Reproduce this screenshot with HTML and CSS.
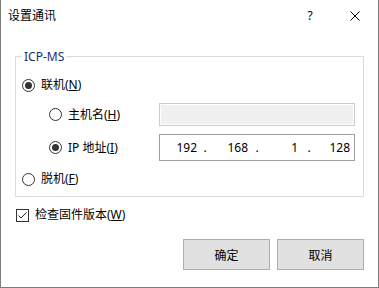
FILE: index.html
```html
<!DOCTYPE html>
<html lang="zh-CN">
<head>
    <meta charset="UTF-8">
    <title>设置通讯</title>
    <link rel="stylesheet" href="styles.css">
</head>
<body>
    <div class="dialogo">
        <div class="titulo">
            <span class="titulo-texto">设置通讯</span>
            <span class="ayuda">?</span>
            <span class="cerrar">
                <svg width="10" height="10" viewBox="0 0 10 10"><path d="M0.5 0.5 L9.5 9.5 M9.5 0.5 L0.5 9.5" stroke="#000" stroke-width="1" fill="none"/></svg>
            </span>
        </div>
        <div class="cuerpo">
            <div class="grupo">
                <span class="leyenda">ICP-MS</span>
                <div class="fila principal">
                    <span class="radio marcado"></span>
                    <span class="etiqueta">联机(<u>N</u>)</span>
                </div>
                <div class="fila sub uno">
                    <div class="sub-etiqueta">
                        <span class="radio"></span>
                        <span class="etiqueta">主机名(<u>H</u>)</span>
                    </div>
                    <div class="caja deshabilitada"></div>
                </div>
                <div class="fila sub dos">
                    <div class="sub-etiqueta">
                        <span class="radio marcado"></span>
                        <span class="etiqueta">IP 地址(<u>I</u>)</span>
                    </div>
                    <div class="caja ip">
                        <span class="num">192</span><span class="punto">.</span>
                        <span class="num">168</span><span class="punto">.</span>
                        <span class="num">1</span><span class="punto">.</span>
                        <span class="num">128</span>
                    </div>
                </div>
                <div class="fila principal ultima">
                    <span class="radio"></span>
                    <span class="etiqueta">脱机(<u>F</u>)</span>
                </div>
            </div>
            <div class="fila check">
                <span class="casilla">
                    <svg width="13" height="13" viewBox="0 0 13 13"><path d="M2.5 6.5 L5 9 L10.5 3.5" stroke="#222" stroke-width="1" fill="none"/></svg>
                </span>
                <span class="etiqueta">检查固件版本(<u>W</u>)</span>
            </div>
            <div class="botones">
                <button class="boton">确定</button>
                <button class="boton">取消</button>
            </div>
        </div>
    </div>
</body>
</html>
```

FILE: styles.css
```css
body {
    margin: 0;
    background: #2b3440;
    font-family: "Segoe UI", "Noto Sans", "Noto Sans CJK SC", sans-serif;
    font-size: 12px;
    color: #000;
}
.dialogo {
    width: 379px;
    height: 288px;
    box-sizing: border-box;
    background: #fff;
    border: 1px solid #7d7d7d;
    border-top: none;
}
.titulo {
    height: 31px;
    display: flex;
    align-items: center;
    padding-left: 7px;
}
.titulo-texto {
    line-height: 14px;
    flex: 1;
}
.ayuda {
    width: 44px;
    text-align: center;
    line-height: 14px;
}
.cerrar {
    width: 46px;
    height: 31px;
    display: flex;
    align-items: center;
    justify-content: center;
}
.cuerpo {
    padding: 0 14px;
}
.grupo {
    position: relative;
    margin-top: 25px;
    height: 141px;
    box-sizing: border-box;
    border: 1px solid #dcdcdc;
}
.leyenda {
    position: absolute;
    top: -7px;
    left: 6px;
    padding: 0 2px;
    background: #fff;
    line-height: 14px;
    color: #172f78;
}
.fila {
    display: flex;
    align-items: center;
}
.principal {
    height: 20px;
    margin-top: 18px;
    padding-left: 6px;
}
.ultima {
    margin-top: 8px;
}
.sub {
    padding-left: 33px;
}
.sub.uno {
    margin-top: 8px;
    height: 23px;
}
.sub.dos {
    margin-top: 8px;
    height: 27px;
}
.sub-etiqueta {
    width: 110px;
    display: flex;
    align-items: center;
}
.etiqueta {
    margin-left: 6px;
    line-height: 14px;
    white-space: nowrap;
}
.radio {
    position: relative;
    width: 13px;
    height: 13px;
    box-sizing: border-box;
    border: 1px solid #333;
    border-radius: 50%;
    flex: none;
}
.radio.marcado::after {
    content: "";
    position: absolute;
    top: 2px;
    left: 2px;
    width: 7px;
    height: 7px;
    border-radius: 50%;
    background: #333;
}
.caja {
    width: 196px;
    box-sizing: border-box;
    height: 100%;
}
.deshabilitada {
    border: 1px solid #cccccc;
    background: #f0f0f0;
    box-shadow: inset 0 0 0 1px #fff;
}
.ip {
    border: 1px solid #a0a0a0;
    background: #fff;
    display: grid;
    grid-template-columns: 37px 16px 35px 18px 32px 22px 30px;
    align-items: center;
    line-height: 14px;
}
.num {
    text-align: right;
}
.punto {
    text-align: center;
}
.check {
    margin-top: 8px;
    height: 20px;
    padding-left: 1px;
}
.casilla {
    width: 13px;
    height: 13px;
    box-sizing: border-box;
    border: 1px solid #333;
    display: flex;
}
.casilla svg {
    margin: -1px;
}
.botones {
    display: flex;
    justify-content: flex-end;
    gap: 7px;
    margin-top: 14px;
}
.boton {
    width: 87px;
    height: 31px;
    background: #e1e1e1;
    border: 1px solid #adadad;
    font-family: inherit;
    font-size: 12px;
    color: #000;
    padding: 0;
}
```
